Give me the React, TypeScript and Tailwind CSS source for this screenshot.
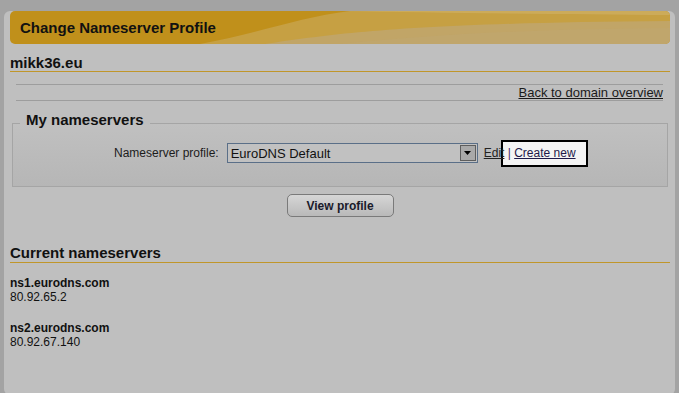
import React from "react";

const font = { fontFamily: '"Liberation Sans", Arial, sans-serif' };

function HeaderBar() {
  return (
    <div className="relative mr-[5px] mt-[7px] flex h-[33px] items-center overflow-hidden rounded-[5px] bg-[#c0901b] pl-[10px]">
      <svg
        className="absolute inset-0 h-full w-full"
        viewBox="0 0 660 33"
        preserveAspectRatio="none"
        aria-hidden
      >
        <path d="M190 33 C 250 22, 290 6, 340 0 L 660 0 L 660 33 Z" fill="#c6a043" />
        <path d="M330 0 L 660 0 L 660 4 C 560 3, 430 2, 330 0 Z" fill="#ccab5a" />
        <path d="M255 33 C 330 22, 400 12, 660 10 L 660 33 Z" fill="#c1a567" />
        <path d="M330 33 C 420 24, 520 18, 660 17 L 660 33 Z" fill="#c0a670" opacity="0.6" />
      </svg>
      <h1 className="relative text-[15px] font-bold leading-[16px] text-[#111]">
        Change Nameserver Profile
      </h1>
    </div>
  );
}

function ProfileRow() {
  return (
    <div className="flex h-[20px] items-center pl-[101px] text-[12px] text-[#1c1c1c]">
      <span className="leading-[14px]">Nameserver profile:</span>
      <div className="ml-[8px] flex h-[20px] w-[251px] items-center justify-between border border-[#5a6f88] bg-[#c1c1c1] pl-[3px] pr-[1px]">
        <span className="text-[13px] leading-[15px] text-[#111]">EuroDNS Default</span>
        <span className="flex h-[16px] w-[16px] items-center justify-center border border-[#5e5e5e] bg-[#a9a9a9]">
          <svg width="7" height="4" viewBox="0 0 7 4" aria-hidden>
            <path d="M0 0 H7 L3.5 4 Z" fill="#000" />
          </svg>
        </span>
      </div>
      <div className="relative ml-[6px] leading-[14px]">
        <div className="absolute left-[17px] top-[-6px] h-[27px] w-[87px] border-2 border-black bg-[#f4f4f4]" />
        <span className="relative">
          <a className="text-[#222] underline">Edit</a>
          <span className="text-[#4b2a6e]"> | </span>
          <a className="text-[#1e1a4a] underline">Create new</a>
        </span>
      </div>
    </div>
  );
}

export default function App() {
  return (
    <div className="h-[393px] w-[679px] bg-[#a3a3a3] pl-[4px] pt-[4px]" style={font}>
      <div className="h-[384px] w-[671px] rounded-[6px] bg-[#bfbfbf] pl-[6px] text-[#111]">
        <HeaderBar />

        <div className="mr-[5px]">
          <h2 className="mt-[11px] border-b border-[#c0962a] text-[15px] font-bold leading-[16px]">
            mikk36.eu
          </h2>

          <div className="mx-[6px] mr-[7px] mt-[12px] flex h-[17px] justify-end border-y border-[#9d9d9d]">
            <a className="text-[13px] leading-[15px] text-[#1a1a1a] underline">
              Back to domain overview
            </a>
          </div>

          <fieldset className="mx-[2px] mt-[11px] border border-[#a5a5a5] bg-gradient-to-b from-[#c0c0c0] to-[#b6b6b6] pb-[23px]">
            <legend className="ml-[7px] px-[6px] pb-[6px] text-[15px] font-bold leading-[16px] text-[#111]">
              My nameservers
            </legend>
            <div className="pt-[9px]">
              <ProfileRow />
            </div>
          </fieldset>

          <div className="mt-[7px] flex justify-center">
            <button className="h-[23px] w-[107px] rounded-[5px] border border-[#7a7a7a] bg-gradient-to-b from-[#d6d6d6] to-[#b9b9b9] text-[12px] font-bold text-[#1a1a2a]">
              View profile
            </button>
          </div>

          <h2 className="mt-[28px] border-b border-[#c0962a] pb-[1px] text-[15px] font-bold leading-[16px]">
            Current nameservers
          </h2>

          <div className="mt-[13px] text-[12px] leading-[14px] text-[#111]">
            <div className="font-bold">ns1.eurodns.com</div>
            <div>80.92.65.2</div>
            <div className="mt-[17px] font-bold">ns2.eurodns.com</div>
            <div>80.92.67.140</div>
          </div>
        </div>
      </div>
    </div>
  );
}
